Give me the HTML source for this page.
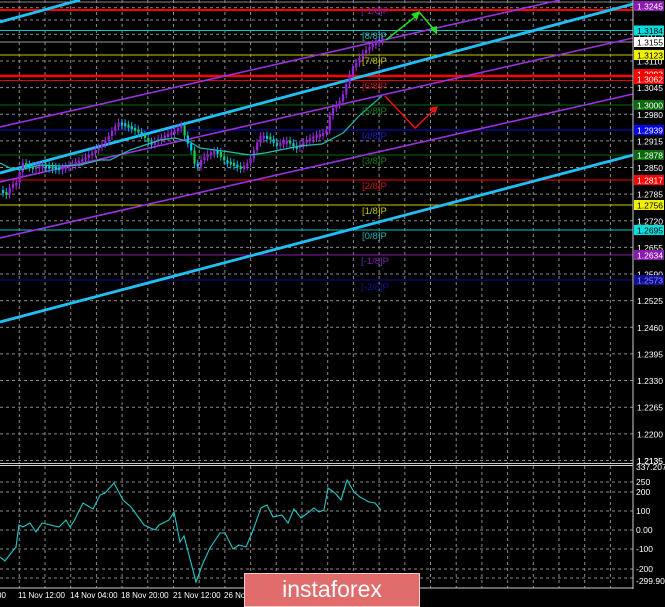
<!DOCTYPE html><html><head><meta charset="utf-8"><style>
body{margin:0;background:#000;width:665px;height:605px;overflow:hidden;font-family:"Liberation Sans",sans-serif}
svg{position:absolute;left:0;top:0}
.logo{position:absolute;left:244px;top:573px;width:176px;height:34px;background:#e06c6c;border:1px solid #f3c9c9;color:#fff;font-size:23px;text-align:center;line-height:31px;box-sizing:border-box}
</style></head><body>
<svg width="665" height="605" id="s" xmlns="http://www.w3.org/2000/svg" font-family="Liberation Sans, sans-serif" font-size="8.5">
<g id="grid" stroke="#8a8a8a" stroke-width="1" stroke-dasharray="3,3"></g>
<g stroke-width="1">
<line x1="0" y1="2" x2="633" y2="2" stroke="#888"/>
<line x1="0" y1="10" x2="633" y2="10" stroke="#f00" stroke-width="2"/>
<line x1="0" y1="30.5" x2="633" y2="30.5" stroke="#00c8c8"/>
<line x1="0" y1="42" x2="633" y2="42" stroke="#999"/>
<line x1="0" y1="55" x2="633" y2="55" stroke="#c8c800"/>
<line x1="0" y1="76" x2="633" y2="76" stroke="#f00" stroke-width="2.5"/>
<line x1="0" y1="80.5" x2="633" y2="80.5" stroke="#e00"/>
<line x1="0" y1="105" x2="633" y2="105" stroke="#0a6a0a"/>
<line x1="0" y1="130" x2="633" y2="130" stroke="#1010d8"/>
<line x1="0" y1="155" x2="633" y2="155" stroke="#0a6a0a"/>
<line x1="0" y1="180" x2="633" y2="180" stroke="#f00"/>
<line x1="0" y1="205" x2="633" y2="205" stroke="#c8c800"/>
<line x1="0" y1="230" x2="633" y2="230" stroke="#00c8c8"/>
<line x1="0" y1="255" x2="633" y2="255" stroke="#8a1ab0"/>
<line x1="0" y1="280" x2="633" y2="280" stroke="#101090"/>
</g>
<g stroke="#9b30e0" stroke-width="1.6">
<line x1="0" y1="127" x2="560" y2="0"/>
<line x1="0" y1="182" x2="633" y2="38"/>
<line x1="0" y1="238" x2="633" y2="94"/>
</g>
<g stroke="#1ec0f5" stroke-width="2.8">
<line x1="0" y1="22" x2="80" y2="0"/>
<line x1="0" y1="173" x2="633" y2="4"/>
<line x1="0" y1="322" x2="633" y2="155"/>
</g>
<g id="candles"></g>
<polyline fill="none" stroke="#20c0b0" stroke-width="1.2" points="0,163 10,168 20,170 40,165 60,166 80,165 100,160 110,160 130,150 145,145 160,140 175,138 190,142 200,148 215,150 230,152 250,155 265,153 280,150 300,146 322,144 343,133 360,115 382,96"/>
<g stroke-width="1.5" fill="none">
<polyline stroke="#20e020" points="386,40 420,13 437,33"/>
<polygon fill="#20e020" stroke="none" points="420,11 411,14 417,20"/>
<polygon fill="#20e020" stroke="none" points="437,35 430,28 437,26"/>
<polyline stroke="#f01010" points="385,96 415,128 436,108"/>
<polygon fill="#f01010" stroke="none" points="438,106 429,108 435,114"/>
</g>
<g font-size="9.5">
<text x="361" y="14" fill="#7a20a8">[-1/8]P</text>
<text x="362" y="39" fill="#20b8b8">[8/8]P</text>
<text x="362" y="64" fill="#c8c800">[7/8]P</text>
<text x="362" y="89" fill="#d01010">[6/8]P</text>
<text x="362" y="114" fill="#108010">[5/8]P</text>
<text x="362" y="139" fill="#1818d0">[4/8]P</text>
<text x="362" y="164" fill="#108010">[3/8]P</text>
<text x="362" y="189" fill="#d01010">[2/8]P</text>
<text x="362" y="214" fill="#c8c800">[1/8]P</text>
<text x="362" y="239" fill="#20b8b8">[0/8]P</text>
<text x="361" y="264" fill="#7a20a8">[-1/8]P</text>
<text x="361" y="290" fill="#101090">[-2/8]P</text>
</g>
<line x1="0" y1="463.5" x2="633" y2="463.5" stroke="#ccc"/>
<line x1="0" y1="465.5" x2="633" y2="465.5" stroke="#ccc"/>
<line x1="0" y1="588" x2="633" y2="588" stroke="#ccc"/>
<line x1="633" y1="0" x2="633" y2="589" stroke="#ccc"/>
<polyline fill="none" stroke="#20c8c8" stroke-width="1.1" points="0,557 5,561 11,553 16,547 19,525 23,527 30,523 36,532 42,523 59,527 66,520 70,527 74,521 83,503 93,509 100,495 105,493 114,483 123,500 131,507 144,525 155,530 159,525 169,520 174,512 180,542 184,536 196,582 203,563 210,548 220,533 225,533 233,549 239,545 246,547 252,533 261,508 267,505 273,517 282,515 288,523 294,509 301,518 305,515 314,508 319,512 324,510 328,488 335,493 341,500 347,480 354,492 360,497 369,502 375,503 381,510"/>
<g id="ax" fill="#fff"></g>
<g fill="#fff" font-size="8">
<text x="-3" y="598">00</text><text x="18" y="598">11 Nov 12:00</text><text x="70" y="598">14 Nov 04:00</text><text x="121" y="598">18 Nov 20:00</text><text x="173" y="598">21 Nov 12:00</text><text x="224" y="598">26 No</text>
</g>
</svg>
<div class="logo">instaforex</div>
<script>
(function(){
var NS="http://www.w3.org/2000/svg",g=document.getElementById('grid'),ax=document.getElementById('ax'),c=document.getElementById('candles');
function el(p,t,a){var e=document.createElementNS(NS,t);for(var k in a)e.setAttribute(k,a[k]);p.appendChild(e);return e;}
for(var x=19.3;x<633;x+=25.7){el(g,'line',{x1:x,y1:0,x2:x,y2:463});el(g,'line',{x1:x,y1:466,x2:x,y2:588});}
var pr=[];for(var i=-2;i<18;i++){var y=61+i*26.63;if(y<0||y>462)continue;el(g,'line',{x1:0,y1:y,x2:633,y2:y});pr.push([y,(1.3110-i*0.0065).toFixed(4)]);}
el(g,'line',{x1:0,y1:20,x2:633,y2:20});
pr.forEach(function(p){var t=el(ax,'text',{x:637,y:p[0]+3.5});t.textContent=p[1];});
[482,492,511,530,549,569,578].forEach(function(y){el(g,'line',{x1:0,y1:y,x2:633,y2:y});});
[[470,'337.2079'],[485,'250'],[495,'200'],[514,'100'],[533,'0.00'],[552,'-100'],[572,'-200'],[584,'-299.9034']].forEach(function(p){var t=el(ax,'text',{x:636,y:p[0]});t.textContent=p[1];});
var t=el(ax,'text',{x:637,y:464});t.textContent='1.2135';
var labs=[[6,'#8a1ab0','#fff','1.3245'],[30.5,'#00e0e0','#000','1.3184'],[42,'#fff','#000','1.3155'],[55,'#f0f000','#000','1.3123'],[74,'#f00','#fff','1.3093'],[79,'#f00','#fff','1.3062'],[105,'#0a6a0a','#fff','1.3000'],[130,'#0000f0','#fff','1.2939'],[155,'#0a6a0a','#fff','1.2878'],[180,'#f00','#fff','1.2817'],[205,'#f0f000','#000','1.2756'],[230,'#00e0e0','#000','1.2695'],[255,'#8a1ab0','#fff','1.2634'],[280,'#101090','#88f','1.2573']];
labs.forEach(function(l){el(ax,'rect',{x:634,y:l[0]-5,width:30,height:10,fill:l[1]});var t=el(ax,'text',{x:637,y:l[0]+3.5,fill:l[2]});t.textContent=l[3];});
var P=[[0,190],[5,195],[10,185],[17,182],[20,162],[30,167],[40,165],[60,168],[80,160],[95,150],[105,140],[113,128],[118,122],[125,125],[135,130],[143,137],[150,145],[155,140],[165,135],[175,130],[180,125],[185,140],[190,150],[195,170],[200,160],[205,155],[215,150],[222,160],[230,163],[240,168],[248,162],[255,145],[260,135],[267,137],[275,145],[285,140],[295,148],[305,140],[315,135],[325,132],[330,110],[340,100],[345,85],[350,70],[355,63],[360,55],[365,50],[370,45],[378,40],[382,38]];
function yAt(x){for(var i=1;i<P.length;i++)if(P[i][0]>=x){var a=P[i-1],b=P[i];return a[1]+(b[1]-a[1])*(x-a[0])/(b[0]-a[0]||1);}return 38;}
var prev=yAt(0);for(var x=2;x<=382;x+=3.3){var y=yAt(x),up=y<prev,tp=Math.min(y,prev),h=Math.max(Math.abs(y-prev),3);
el(c,'line',{x1:x+1,y1:tp-4,x2:x+1,y2:tp+h+4,stroke:up?'#9b30e0':'#00b0e0','stroke-width':1});
el(c,'rect',{x:x,y:tp,width:2.2,height:h,fill:up?'#9b20e0':((x|0)%2?'#20d040':'#00c8f8')});prev=y;}
})();
</script>
</body></html>
